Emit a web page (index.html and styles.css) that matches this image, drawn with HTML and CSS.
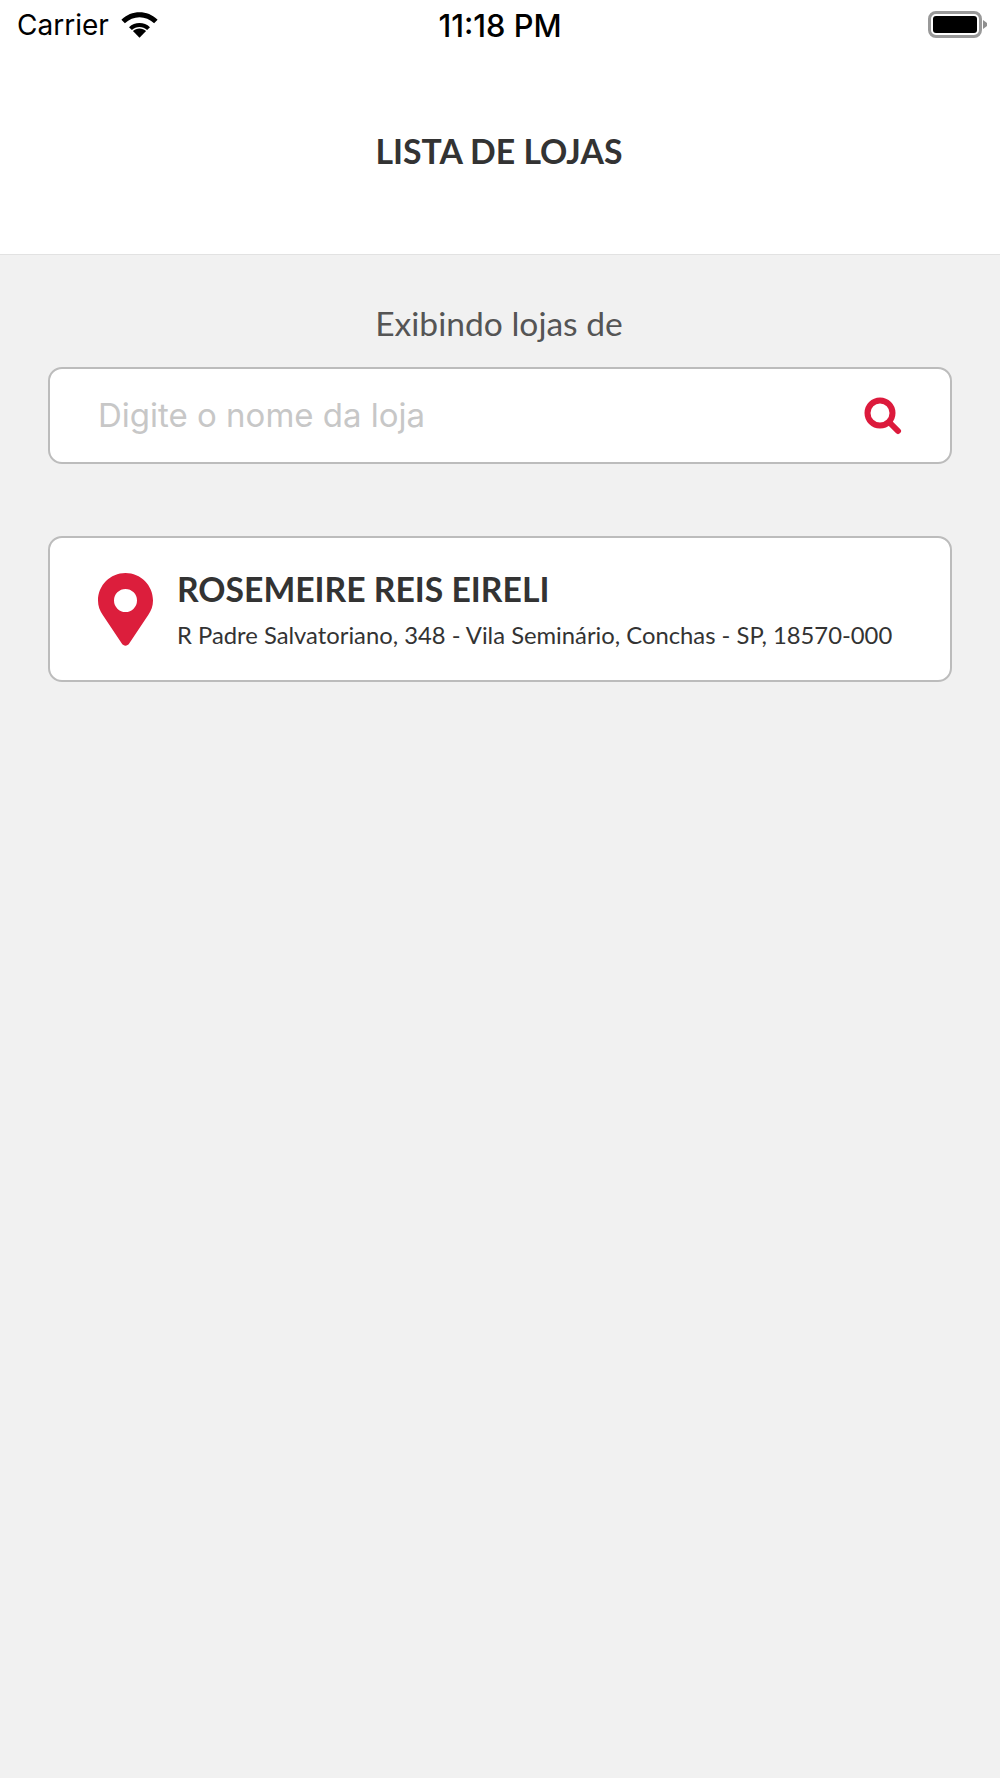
FILE: index.html
```html
<!DOCTYPE html>
<html>
<head>
    <title>Lista de lojas</title>
    <link rel="stylesheet" href="styles.css">
</head>
<body>
    <div class="status-bar">
        <div class="status-left">
            <span class="carrier">Carrier</span>
            <svg class="wifi" width="37" height="27" viewBox="0 0 36 26">
                <path d="M18 26 L11.6 19.4 C15 16 21 16 24.4 19.4 Z" fill="#000"/>
                <path d="M7.8 15.6 C13.4 10.2 22.6 10.2 28.2 15.6 L25.4 18.4 C21.3 14.4 14.7 14.4 10.6 18.4 Z" fill="#000"/>
                <path d="M0.4 8.4 C10.2 -1.2 25.8 -1.2 35.6 8.4 L32.2 11.8 C24.2 4 11.8 4 3.8 11.8 Z" fill="#000"/>
            </svg>
        </div>
        <span class="clock">11:18 PM</span>
        <div class="battery">
            <div class="battery-body"><div class="battery-fill"></div></div>
            <svg class="battery-cap" width="4" height="9" viewBox="0 0 4 9">
                <path d="M0 0 L4 3 L4 6 L0 9 Z" fill="#8f8f8f"/>
            </svg>
        </div>
    </div>

    <header class="title-bar">
        <h1>LISTA DE LOJAS</h1>
    </header>

    <main class="content">
        <p class="showing">Exibindo lojas de</p>

        <div class="search-box">
            <span class="placeholder">Digite o nome da loja</span>
            <svg width="38" height="38" viewBox="0 0 38 38">
                <circle cx="16" cy="16" r="12.5" fill="none" stroke="#dc1a3c" stroke-width="6"/>
                <line x1="25.5" y1="25.5" x2="34" y2="34" stroke="#dc1a3c" stroke-width="6" stroke-linecap="round"/>
            </svg>
        </div>

        <div class="store-card">
            <svg class="pin" width="55" height="73" viewBox="0 0 55 73">
                <path fill-rule="evenodd" fill="#dc1e3c" d="M27.5 0 C12.3 0 0 12.3 0 27.5 C0 33 1.8 37.6 4.6 41.8 L23.8 70.6 C25.6 73.4 29.4 73.4 31.2 70.6 L50.4 41.8 C53.2 37.6 55 33 55 27.5 C55 12.3 42.7 0 27.5 0 Z M27.5 16 A11.5 11.5 0 1 1 27.5 39 A11.5 11.5 0 1 1 27.5 16 Z"/>
            </svg>
            <div class="store-info">
                <div class="store-name">ROSEMEIRE REIS EIRELI</div>
                <div class="store-address">R Padre Salvatoriano, 348 - Vila Seminário, Conchas - SP, 18570-000</div>
            </div>
        </div>
    </main>
</body>
</html>
```

FILE: styles.css
```css
* {
    box-sizing: border-box;
}
html, body {
    height: 100%;
}
body {
    margin: 0;
    display: flex;
    flex-direction: column;
    background-color: #f1f1f1;
    font-family: Lato, sans-serif;
}
.status-bar {
    height: 50px;
    padding: 0 13px 0 17px;
    display: flex;
    align-items: center;
    justify-content: space-between;
    background-color: #fff;
    color: #000;
    font-family: Inter, sans-serif;
}
.status-left {
    width: 236px;
    display: flex;
    align-items: center;
    gap: 12px;
}
.carrier {
    font-size: 28px;
}
.wifi {
    margin-top: -2px;
}
.clock {
    font-size: 30.8px;
    font-weight: 500;
}
.battery {
    width: 240px;
    margin-top: -2px;
    display: flex;
    justify-content: flex-end;
    align-items: center;
    gap: 1px;
}
.battery-body {
    width: 54px;
    height: 27px;
    padding: 2px;
    border: 3px solid #999;
    border-radius: 8px;
}
.battery-fill {
    height: 100%;
    background-color: #000;
    border-radius: 3px;
}
.title-bar {
    height: 205px;
    padding: 0 2px 3px 0;
    display: flex;
    align-items: center;
    justify-content: center;
    background-color: #fff;
    border-bottom: 1px solid #e2e2e2;
}
h1 {
    margin: 0;
    font-size: 33.8px;
    font-weight: 700;
    color: #333;
}
.content {
    flex: 1;
    padding: 0 48px;
}
.showing {
    margin: 0;
    padding: 49px 2px 0 0;
    height: 112px;
    text-align: center;
    font-size: 33.6px;
    line-height: 38px;
    color: #555;
}
.search-box {
    height: 97px;
    padding: 0 48px;
    display: flex;
    align-items: center;
    justify-content: space-between;
    background-color: #fff;
    border: 2px solid #bcbcbc;
    border-radius: 14px;
}
.placeholder {
    margin-bottom: 2px;
    font-family: Inter, sans-serif;
    font-size: 33px;
    color: #c7c7c7;
}
.store-card {
    height: 146px;
    margin-top: 72px;
    padding: 0 48px;
    display: flex;
    align-items: center;
    gap: 24px;
    background-color: #fff;
    border: 2px solid #bcbcbc;
    border-radius: 14px;
}
.store-info {
    padding-top: 2px;
}
.store-name {
    font-size: 33.7px;
    font-weight: 700;
    color: #333;
    line-height: 40px;
}
.store-address {
    margin-top: 10px;
    font-size: 23.8px;
    line-height: 32px;
    color: #333;
    white-space: nowrap;
}
```
